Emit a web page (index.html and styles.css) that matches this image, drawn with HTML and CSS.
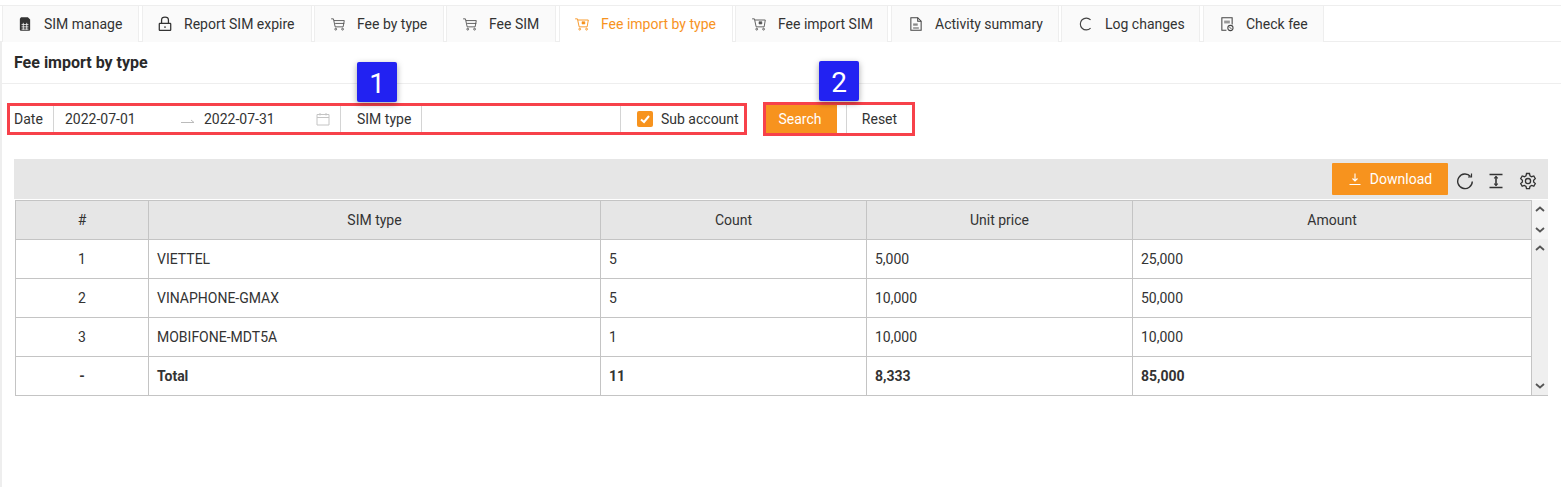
FILE: index.html
```html
<!DOCTYPE html>
<html lang="en">
<head>
  <meta charset="UTF-8">
  <title>Fee import by type</title>
  <link rel="stylesheet" href="styles.css">
</head>
<body>
  <nav class="tabs">
    <a class="tab tab-1">
      <svg class="ico" viewBox="0 0 14 14"><path d="M3.500 1h6l2 2v9a1 1 0 0 1-1 1h-7a1 1 0 0 1-1-1V2.500z" fill="#333"/><path d="M4 7.500h6M4 9.500h6M4 11.500h6M5.500 6v6M8.500 6v6" stroke="#fafafa" stroke-width=".7" fill="none"/></svg>
      SIM manage
    </a>
    <a class="tab tab-2">
      <svg class="ico" viewBox="0 0 14 14" fill="none" stroke="#333" stroke-width="1.100"><rect x="2" y="6.500" width="10" height="6" rx=".5"/><path d="M4 6.500V3.500a3 2.500 0 0 1 6 0v3M7 9v1.500"/></svg>
      Report SIM expire
    </a>
    <a class="tab tab-3">
      <svg class="ico" viewBox="0 0 14 14" fill="none" stroke="#555" stroke-width=".8"><path d="M1 2.500h2l1.500 7h7l1-5.500H3.500M4.500 6.500h8"/><circle cx="5" cy="11.500" r=".8"/><circle cx="11" cy="11.500" r=".8"/></svg>
      Fee by type
    </a>
    <a class="tab tab-4">
      <svg class="ico" viewBox="0 0 14 14" fill="none" stroke="#555" stroke-width=".8"><path d="M1 2.500h2l1.500 7h7l1-5.500H3.500M4.500 6.500h8"/><circle cx="5" cy="11.500" r=".8"/><circle cx="11" cy="11.500" r=".8"/></svg>
      Fee SIM
    </a>
    <a class="tab tab-5 active">
      <svg class="ico" viewBox="0 0 14 14" fill="none" stroke="#f7931e" stroke-width=".8"><path d="M1 2.500h2l1.500 7h7l1-6H3.500"/><path d="M7 5h2.500v2H7z" fill="#f7931e" stroke-width=".5"/><circle cx="5" cy="11.500" r=".8"/><circle cx="11" cy="11.500" r=".8"/></svg>
      Fee import by type
    </a>
    <a class="tab tab-6">
      <svg class="ico" viewBox="0 0 14 14" fill="none" stroke="#555" stroke-width=".8"><path d="M1 2.500h2l1.500 7h7l1-6H3.500"/><path d="M7 5h2.500v2H7z" fill="#555" stroke-width=".5"/><circle cx="5" cy="11.500" r=".8"/><circle cx="11" cy="11.500" r=".8"/></svg>
      Fee import SIM
    </a>
    <a class="tab tab-7">
      <svg class="ico" viewBox="0 0 14 14" fill="none" stroke="#444" stroke-width=".9"><path d="M2.500 1.500h6l3 3v8h-9z"/><path d="M8.500 1.500v3h3"/><path d="M4.500 6.500h4v2h-4z" fill="#888" stroke="none"/><path d="M4.500 10.500h5" stroke-width=".8"/></svg>
      Activity summary
    </a>
    <a class="tab tab-8">
      <svg class="ico" viewBox="0 0 14 14" fill="none" stroke="#444"><path d="M11 3.400A5.200 5.200 0 1 0 11 10.600"/></svg>
      Log changes
    </a>
    <a class="tab tab-9">
      <svg class="ico" viewBox="0 0 14 14" fill="none" stroke="#444" stroke-width=".9"><path d="M6.500 12.500H2.500v-11h9v6"/><path d="M4.500 4h5v2.500h-5z" fill="#999" stroke="none"/><circle cx="10" cy="10.500" r="2.300"/><path d="M9 9.500l2 2" stroke-width=".8"/></svg>
      Check fee
    </a>
  </nav>

  <main class="content">
    <h1 class="title">Fee import by type</h1>

    <div class="filters">
      <div class="mark-box filter-box">
        <span class="badge badge-1">1</span>
        <span class="cell cell-date">Date</span>
        <div class="cell cell-range">
          <span class="range-from">2022-07-01</span>
          <svg class="range-arrow" viewBox="0 0 14 6" fill="none" stroke="#bbb"><path d="M0 4.500h13L10 2"/></svg>
          <span class="range-to">2022-07-31</span>
          <svg class="range-cal" viewBox="0 0 14 14" fill="none" stroke="#c4c4c4"><path d="M1 2.500h12v10.500H1zM1 5.500h12M4 1v2.500M10 1v2.500"/></svg>
        </div>
        <span class="cell cell-type">SIM type</span>
        <span class="cell cell-input"></span>
        <label class="cell cell-sub">
          <span class="check"><svg viewBox="0 0 16 16" fill="none" stroke="#fff" stroke-width="2"><path d="M4 8.500l3 2.500 5-6"/></svg></span>
          Sub account
        </label>
      </div>
      <div class="mark-box button-box">
        <span class="badge badge-2">2</span>
        <button class="btn-search">Search</button>
        <button class="btn-reset">Reset</button>
      </div>
    </div>

    <section class="grid">
      <div class="toolbar">
        <button class="btn-download">
          <svg viewBox="0 0 14 14" fill="none" stroke="#fff" stroke-width="1.100"><path d="M7 1.500v7M4.500 6.500L7 9l2.500-2.500M1.500 12.500h11"/></svg>
          Download
        </button>
        <svg class="tool tool-refresh" viewBox="0 0 18 18" fill="none" stroke="#333" stroke-width="1.400"><path d="M14.500 4.500A7.300 7.300 0 1 0 16.300 9.500"/><path d="M15.500 1.500v3.500H12" stroke-width="1.200"/></svg>
        <svg class="tool tool-height" viewBox="0 0 18 18" fill="none" stroke="#333" stroke-width="1.600"><path d="M2.500 2.500h13M2.500 15.500h13M9 4.500v9"/><path d="M7.200 6.300L9 4.500l1.800 1.800M7.200 11.700L9 13.500l1.800-1.800" stroke-width="1.100"/></svg>
        <svg class="tool tool-gear" viewBox="0 0 18 18" fill="none" stroke="#333" stroke-width="1.300"><path d="M7.500 1.500h3l.5 2.300 1.600.9 2.200-.7 1.500 2.600-1.700 1.600v1.800l1.700 1.600-1.500 2.600-2.200-.7-1.600.9-.5 2.300h-3l-.5-2.300-1.600-.9-2.200.7-1.500-2.600 1.700-1.600V8.200L1.700 6.600l1.500-2.600 2.200.7L7 3.800z"/><circle cx="9" cy="9.100" r="2.600"/></svg>
      </div>
      <div class="grid-body">
        <table class="data">
          <colgroup>
            <col class="col-no"><col class="col-type"><col class="col-num"><col class="col-num"><col>
          </colgroup>
          <thead>
            <tr><th>#</th><th>SIM type</th><th>Count</th><th>Unit price</th><th>Amount</th></tr>
          </thead>
          <tbody>
            <tr><td class="center">1</td><td>VIETTEL</td><td>5</td><td>5,000</td><td>25,000</td></tr>
            <tr><td class="center">2</td><td>VINAPHONE-GMAX</td><td>5</td><td>10,000</td><td>50,000</td></tr>
            <tr><td class="center">3</td><td>MOBIFONE-MDT5A</td><td>1</td><td>10,000</td><td>10,000</td></tr>
            <tr class="total"><td class="center">-</td><td>Total</td><td>11</td><td>8,333</td><td>85,000</td></tr>
          </tbody>
        </table>
        <div class="scrollbars">
          <div class="scroll scroll-head">
            <svg viewBox="0 0 10 6"><path d="M1 5l4-3.500L9 5" /></svg>
            <svg viewBox="0 0 10 6"><path d="M1 1l4 3.500L9 1" /></svg>
          </div>
          <div class="scroll scroll-main">
            <svg viewBox="0 0 10 6"><path d="M1 5l4-3.500L9 5" /></svg>
            <svg viewBox="0 0 10 6"><path d="M1 1l4 3.500L9 1" /></svg>
          </div>
        </div>
      </div>
    </section>
  </main>
</body>
</html>
```

FILE: styles.css
```css
* {
  box-sizing: border-box;
}
html, body {
  height: 100%;
}
body {
  margin: 0;
  padding-top: 5px;
  font-family: Roboto, "Liberation Sans", sans-serif;
  font-size: 14px;
  color: #333;
  background-color: #fff;
  overflow: hidden;
}

/* tabs */
.tabs {
  display: flex;
  height: 37px;
  padding-left: 2px;
  border-top: 1px solid #eee;
  border-bottom: 1px solid #eee;
}
.tab {
  display: flex;
  align-items: center;
  height: 36px;
  margin-bottom: -1px;
  padding-left: 14px;
  background-color: #fafafa;
  border: 1px solid #eee;
  border-top: 0;
  border-bottom: 0;
  white-space: nowrap;
}
.tab.active {
  color: #f7931e;
  background-color: #fff;
}
.ico {
  width: 16px;
  height: 16px;
  margin-right: 11px;
  flex: none;
}
.tab-1 { width: 137px; margin-right: 3px; }
.tab-2 { width: 170px; margin-right: 2px; }
.tab-3 { width: 130px; margin-right: 2px; padding-left: 15px; }
.tab-4 { width: 110px; margin-right: 3px; padding-left: 15px; }
.tab-5 { width: 174px; margin-right: 2px; }
.tab-6 { width: 153px; margin-right: 3px; padding-left: 15px; }
.tab-7 { width: 168px; margin-right: 2px; padding-left: 16px; }
.tab-8 { width: 139px; margin-right: 3px; padding-left: 16px; }
.tab-9 { width: 121px; padding-left: 15px; }

.content {
  min-height: 445px;
  border-left: 2px solid #eee;
}
.title {
  margin: 0;
  height: 42px;
  padding: 11px 12px 0;
  font-size: 16px;
  line-height: 20px;
  font-weight: 700;
  color: #2a2a2a;
  border-bottom: 1px solid #eee;
}

/* filter row */
.filters {
  display: flex;
  align-items: center;
  gap: 16px;
  margin: 18px 0 0 5px;
}
.mark-box {
  position: relative;
  display: flex;
  border: 3px solid #f7414a;
}
.filter-box {
  width: 740px;
  height: 32px;
}
.button-box {
  width: 152px;
  height: 34px;
  padding: 0;
  background-color: #fff;
}
.badge {
  position: absolute;
  top: -44px;
  width: 40px;
  height: 40px;
  line-height: 43px;
  text-align: center;
  font-size: 28px;
  color: #fff;
  background-color: #2222f2;
  border-radius: 2px;
  box-shadow: 0 2px 6px rgba(0, 0, 0, .35);
  z-index: 2;
}
.badge-1 { left: 347px; }
.badge-2 { left: 53px; }
.cell {
  display: flex;
  align-items: center;
  height: 100%;
  border-right: 1px solid #d4d4d4;
  white-space: nowrap;
}
.cell-date {
  width: 44px;
  padding-left: 4px;
}
.cell-range {
  width: 287px;
  padding-left: 11px;
}
.range-from { width: 116px; }
.range-arrow {
  width: 14px;
  height: 6px;
  margin: 4px 9px 0 0;
}
.range-to { width: 112px; }
.range-cal {
  width: 14px;
  height: 14px;
}
.cell-type {
  width: 81px;
  padding-left: 16px;
}
.cell-input {
  width: 199px;
}
.cell-sub {
  flex: 1;
  border-right: 0;
  padding-left: 16px;
}
.check {
  display: flex;
  width: 16px;
  height: 16px;
  margin-right: 8px;
  background-color: #f7931e;
  border-radius: 2px;
}
.btn-search {
  width: 72px;
  height: 28px;
  border: 0;
  padding: 0 3px 0 0;
  font: inherit;
  color: #fff;
  background-color: #f7931e;
}
.btn-reset {
  width: 67px;
  height: 28px;
  margin-left: 9px;
  padding: 0;
  border: 0;
  border-left: 1px solid #d4d4d4;
  font: inherit;
  color: #333;
  background-color: #fff;
}

/* grid */
.grid {
  margin: 23px 13px 0 12px;
}
.toolbar {
  display: flex;
  align-items: center;
  height: 40px;
  padding-right: 11px;
  justify-content: flex-end;
  background-color: #e6e6e6;
}
.btn-download {
  display: flex;
  align-items: center;
  justify-content: center;
  width: 116px;
  height: 32px;
  border: 0;
  padding: 0;
  font: inherit;
  color: #fff;
  background-color: #f7931e;
  border-radius: 1px;
}
.btn-download svg {
  width: 14px;
  height: 14px;
  margin-right: 8px;
}
.tool {
  width: 18px;
  height: 18px;
  margin-top: 4px;
}
.tool-refresh { margin-left: 8px; }
.tool-height { margin-left: 13px; }
.tool-gear { margin-left: 14px; }
.grid-body {
  display: flex;
  margin-left: 1px;
  margin-top: 1px;
}
.data {
  width: 1517px;
  table-layout: fixed;
  border-collapse: collapse;
}
.col-no { width: 133px; }
.col-type { width: 452px; }
.col-num { width: 266px; }
.data th, .data td {
  height: 39px;
  padding: 0 8px;
  border: 1px solid #c4c4c4;
  font-size: 14px;
  text-align: left;
}
.data th {
  font-weight: 400;
  text-align: center;
  background-color: #e6e6e6;
}
.data td.center {
  text-align: center;
}
.total td {
  font-weight: 700;
}
.scrollbars {
  width: 16px;
  border-bottom: 1px solid #c4c4c4;
}
.scroll {
  display: flex;
  flex-direction: column;
  justify-content: space-between;
  align-items: center;
  padding: 6px 0;
}
.scroll svg {
  width: 10px;
  height: 6px;
  fill: none;
  stroke: #555;
  stroke-width: 1.8;
}
.scroll-head {
  height: 39px;
  background-color: #f4f4f4;
}
.scroll-main {
  height: 156px;
  background-color: #efefef;
}
```
